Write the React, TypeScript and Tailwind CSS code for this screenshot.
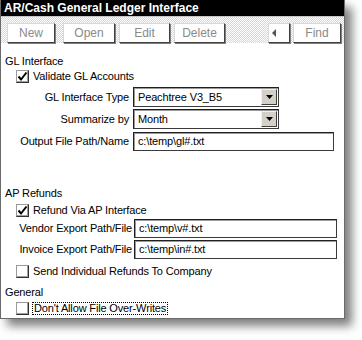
import React from 'react';

const FONT = "font-['Liberation_Sans',Arial,sans-serif]";

function ToolButton({ label, className = '' }: { label: string; className?: string }) {
  return (
    <div
      className={`h-[20px] flex items-center justify-center bg-white border border-t-[#d8d8d8] border-l-[#d8d8d8] border-r-[#404040] border-b-[#404040] shadow-[1px_1px_0_#808080] text-[12px] text-[#8a8a8a] ${className}`}
    >
      {label}
    </div>
  );
}

function CheckBox({ checked = false }: { checked?: boolean }) {
  return (
    <div className="w-[13px] h-[13px] bg-white border border-t-[#9a9a9a] border-l-[#9a9a9a] border-r-[#303030] border-b-[#303030] shadow-[inset_-1px_-1px_0_#a0a0a0] flex items-center justify-center">
      {checked && (
        <svg width="11" height="11" viewBox="0 0 11 11">
          <path d="M1.5 5.5 L4 8.5 L9.5 1.5" fill="none" stroke="#000" strokeWidth="2" />
        </svg>
      )}
    </div>
  );
}

function TextField({ value, width }: { value: string; width: string }) {
  return (
    <div
      className={`h-[19px] ${width} bg-white border border-[#3a3a3a] border-t-[#202020] border-l-[#202020] shadow-[inset_1px_1px_0_#9a9a9a] flex items-center pl-[4px] text-[11px] text-black`}
    >
      {value}
    </div>
  );
}

function SelectField({ value }: { value: string }) {
  return (
    <div className="h-[20px] w-[146px] bg-white border border-[#3a3a3a] border-t-[#202020] border-l-[#202020] shadow-[inset_1px_1px_0_#9a9a9a] flex items-center text-[11px] text-black">
      <span className="flex-1 pl-[4px]">{value}</span>
      <div className="w-[16px] h-[16px] mr-[1px] bg-[#d4d0c8] border border-t-[#f0f0f0] border-l-[#f0f0f0] border-r-[#404040] border-b-[#404040] flex items-center justify-center">
        <svg width="7" height="4" viewBox="0 0 7 4">
          <path d="M0 0 H7 L3.5 4 Z" fill="#000" />
        </svg>
      </div>
    </div>
  );
}

export default function App() {
  return (
    <div className={`w-[362px] h-[340px] bg-white overflow-hidden ${FONT}`}>
      <div className="w-[345px] h-[319px] flex flex-col bg-white border-l border-r border-b border-[#6a6a6a] shadow-[7px_7px_9px_rgba(0,0,0,0.5)]">
        {/* title bar */}
        <div className="h-[16px] bg-black text-white font-bold text-[12px] leading-[16px] pl-[3px] whitespace-nowrap">
          AR/Cash General Ledger Interface
        </div>

        {/* toolbar */}
        <div className="h-[27px] flex items-start pt-[6px] border-t border-[#c8c8c8] bg-[repeating-conic-gradient(#d6d6d6_0_25%,#ffffff_0_50%)] bg-[length:2px_2px]">
          <ToolButton label="New" className="ml-[6px] w-[48px]" />
          <ToolButton label="Open" className="ml-[8px] w-[52px]" />
          <ToolButton label="Edit" className="ml-[4px] w-[51px]" />
          <ToolButton label="Delete" className="ml-[4px] w-[51px]" />
          <div className="ml-[43px] w-[22px] h-[20px] bg-white border border-t-[#d8d8d8] border-l-[#d8d8d8] border-r-[#404040] border-b-[#404040] shadow-[1px_1px_0_#808080] flex items-center pl-[3px]">
            <svg width="4" height="8" viewBox="0 0 4 8">
              <path d="M4 0 V8 L0 4 Z" fill="#555" />
            </svg>
          </div>
          <ToolButton label="Find" className="ml-[3px] w-[48px]" />
        </div>

        {/* content */}
        <div className="flex flex-col text-[11px] tracking-[-0.15px] text-black pl-[4px]">
          <div className="mt-[11px] h-[14px] flex items-center">GL Interface</div>

          <div className="mt-[1px] h-[14px] flex items-center pl-[11px] gap-[4px]">
            <CheckBox checked />
            <span>Validate GL Accounts</span>
          </div>

          <div className="mt-[4px] flex items-center">
            <span className="w-[125px] text-right pr-[1px]">GL Interface Type</span>
            <span className="ml-[3px]"><SelectField value="Peachtree V3_B5" /></span>
          </div>

          <div className="mt-[2px] flex items-center">
            <span className="w-[125px] text-right pr-[1px]">Summarize by</span>
            <span className="ml-[3px]"><SelectField value="Month" /></span>
          </div>

          <div className="mt-[3px] flex items-center">
            <span className="w-[125px] text-right pr-[1px]">Output File Path/Name</span>
            <span className="ml-[3px]"><TextField value="c:\temp\gl#.txt" width="w-[201px]" /></span>
          </div>

          <div className="mt-[35px] h-[14px] flex items-center">AP Refunds</div>

          <div className="mt-[3px] h-[14px] flex items-center pl-[11px] gap-[4px]">
            <CheckBox checked />
            <span>Refund Via AP Interface</span>
          </div>

          <div className="mt-[2px] flex items-center">
            <span className="w-[128px] text-right pr-[1px]">Vendor Export Path/File</span>
            <span className="ml-[1px]"><TextField value="c:\temp\v#.txt" width="w-[203px]" /></span>
          </div>

          <div className="mt-[2px] flex items-center">
            <span className="w-[128px] text-right pr-[1px]">Invoice Export Path/File</span>
            <span className="ml-[1px]"><TextField value="c:\temp\in#.txt" width="w-[203px]" /></span>
          </div>

          <div className="mt-[5px] h-[14px] flex items-center pl-[11px] gap-[4px]">
            <CheckBox />
            <span>Send Individual Refunds To Company</span>
          </div>

          <div className="mt-[7px] h-[14px] flex items-center">General</div>

          <div className="mt-[2px] h-[14px] flex items-center pl-[11px] gap-[3px]">
            <CheckBox />
            <span className="border border-dotted border-black px-[1px] leading-[11px]">Don't Allow File Over-Writes</span>
          </div>
        </div>
      </div>
    </div>
  );
}
